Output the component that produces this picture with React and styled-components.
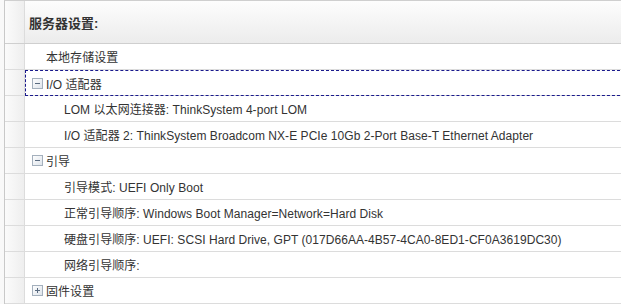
import React from "react";
import styled, { createGlobalStyle } from "styled-components";

const Global = createGlobalStyle`
  html, body {
    margin: 0;
    padding: 0;
    background: #f9f9f9;
    overflow: hidden;
  }
  body {
    font-family: "Liberation Sans", Arial, "Noto Sans CJK SC", sans-serif;
    font-size: 12px;
    color: #333;
  }
`;

const rows = [
  { level: 1, text: "本地存储设置" },
  { level: 1, text: "I/O 适配器", toggle: "minus", focused: true },
  { level: 2, text: "LOM 以太网连接器: ThinkSystem 4-port LOM" },
  {
    level: 2,
    text: "I/O 适配器 2: ThinkSystem Broadcom NX-E PCIe 10Gb 2-Port Base-T Ethernet Adapter",
  },
  { level: 1, text: "引导", toggle: "minus" },
  { level: 2, text: "引导模式: UEFI Only Boot" },
  { level: 2, text: "正常引导顺序: Windows Boot Manager=Network=Hard Disk" },
  {
    level: 2,
    text: "硬盘引导顺序: UEFI: SCSI Hard Drive, GPT (017D66AA-4B57-4CA0-8ED1-CF0A3619DC30)",
  },
  { level: 2, text: "网络引导顺序:" },
  { level: 1, text: "固件设置", toggle: "plus" },
];

const Toggle = ({ kind }) => (
  <ToggleBox>
    <svg width="11" height="11" viewBox="0 0 11 11">
      <defs>
        <linearGradient id={"tg" + kind} x1="0" y1="0" x2="1" y2="1">
          <stop offset="0" stopColor="#ffffff" />
          <stop offset="1" stopColor="#dde3ea" />
        </linearGradient>
      </defs>
      <rect x="0.5" y="0.5" width="10" height="10" fill={"url(#tg" + kind + ")"} stroke="#a4b0bd" />
      <line x1="3" y1="5.5" x2="8" y2="5.5" stroke="#5a6b80" />
      {kind === "plus" && <line x1="5.5" y1="3" x2="5.5" y2="8" stroke="#5a6b80" />}
    </svg>
  </ToggleBox>
);

const App = () => {
  return (
    <>
      <Global />
      <Table>
        <Row $header>
          <Gutter />
          <HeaderCell>服务器设置:</HeaderCell>
        </Row>
        {rows.map((r, i) => (
          <Row key={i}>
            <Gutter />
            <Cell $level={r.toggle ? 0 : r.level} $focused={r.focused}>
              {r.toggle && <Toggle kind={r.toggle} />}
              <span>{r.text}</span>
            </Cell>
          </Row>
        ))}
      </Table>
    </>
  );
};

export default App;

const Table = styled.div`
  margin-left: 4px;
  border-left: 1px solid #c9c9c9;
  border-top: 1px solid #cfcfcf;
  background: #fff;
  overflow: hidden;
`;

const Row = styled.div`
  display: grid;
  grid-template-columns: 20px 1fr;
  height: ${(p) => (p.$header ? "42px" : "25px")};
  border-bottom: 1px solid ${(p) => (p.$header ? "#cfcfcf" : "#dcdcdc")};
  background: ${(p) =>
    p.$header ? "linear-gradient(#fdfdfd, #ececec)" : "#fff"};
`;

const Gutter = styled.div`
  border-right: 1px solid #dcdcdc;
  background: linear-gradient(to right, #fbfbfb, #eeeeee);
`;

const HeaderCell = styled.div`
  display: flex;
  align-items: center;
  padding-left: 4px;
  font-size: 13px;
  font-weight: bold;
  color: #333;
`;

const Cell = styled.div`
  display: flex;
  align-items: center;
  min-width: 0;
  padding-left: ${(p) => (p.$level === 0 ? 7 : p.$level === 1 ? 21 : 39)}px;
  white-space: nowrap;
  outline: ${(p) => (p.$focused ? "1px dashed #1a1a8c" : "none")};
  outline-offset: -1px;
  margin-bottom: ${(p) => (p.$focused ? "-1px" : "0")};
  margin-right: ${(p) => (p.$focused ? "-4px" : "0")};
  letter-spacing: 0.05px;
`;

const ToggleBox = styled.span`
  display: inline-flex;
  width: 11px;
  height: 11px;
  margin-right: 3px;
`;
